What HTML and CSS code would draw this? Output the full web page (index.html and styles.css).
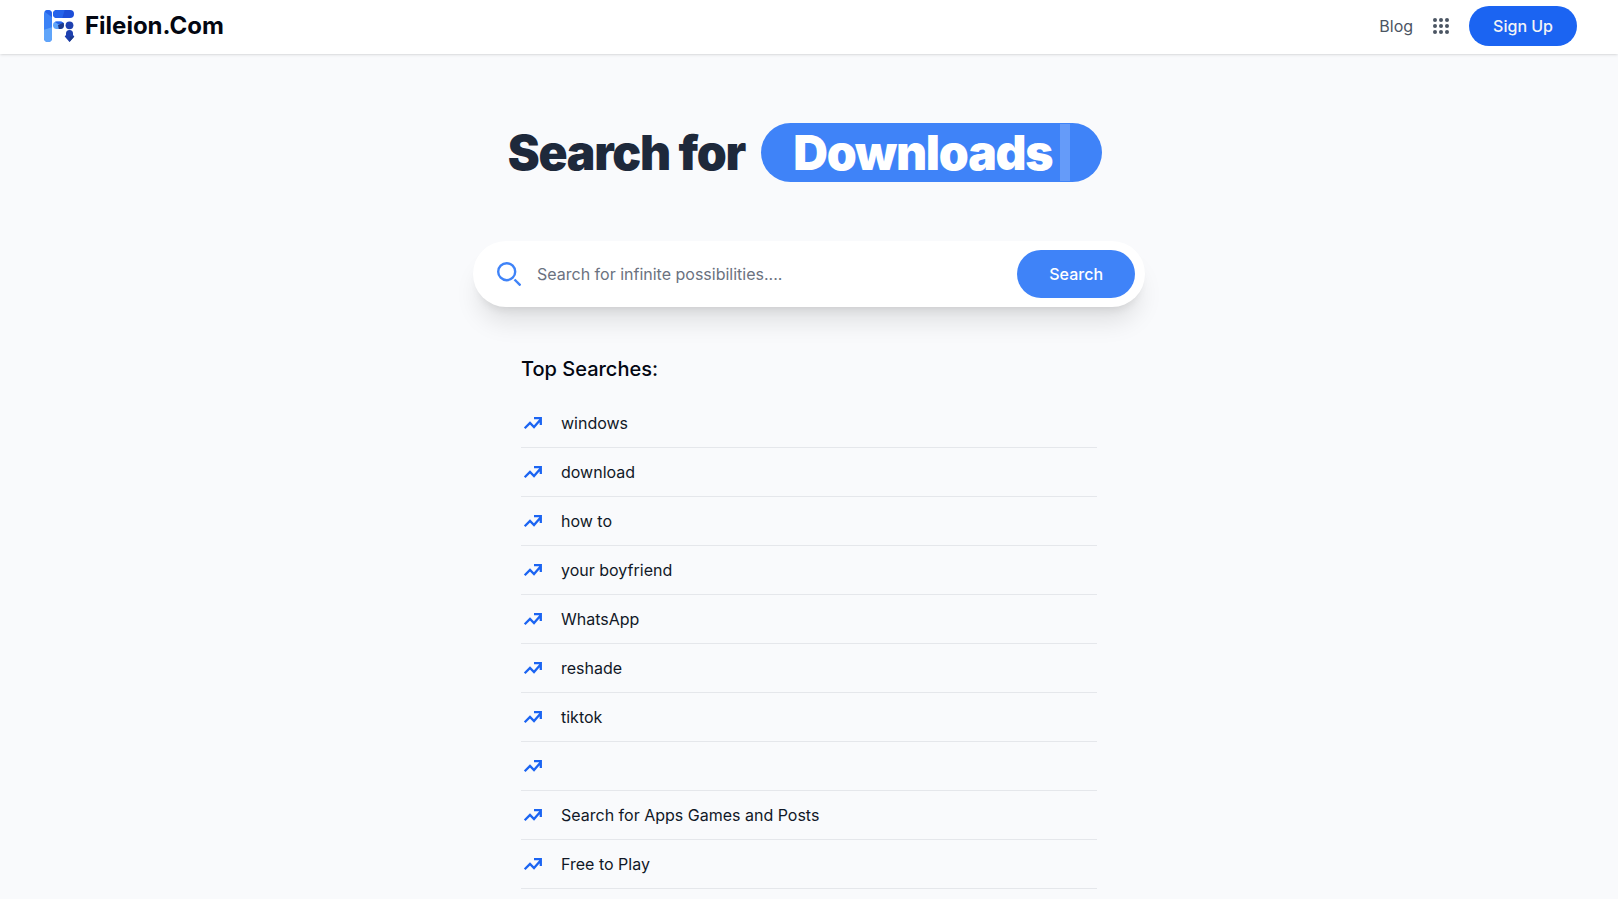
FILE: index.html
```html
<!DOCTYPE html>
<html lang="en">
<head>
<meta charset="utf-8">
<meta name="viewport" content="width=device-width, initial-scale=1">
<title>Fileion.Com</title>
<link rel="stylesheet" href="styles.css">
</head>
<body>
<svg class="sprite" aria-hidden="true">
  <symbol id="trend" viewBox="0 0 24 24"><path fill="none" stroke="currentColor" stroke-width="2.300" d="M3.700 17.300L9 12l4 4 7-8M13 7.200h6.800v6.800"/></symbol>
</svg>
<header class="header">
  <a class="brand" href="#">
    <svg class="brand-icon" viewBox="0 0 32 34" aria-hidden="true">
      <defs><clipPath id="stem"><rect x="1" y="1" width="8" height="32" rx="4"/></clipPath><clipPath id="bar"><rect x="10" y="1" width="21" height="8" rx="4"/></clipPath><clipPath id="bean"><rect x="10" y="12.500" width="11" height="7.500" rx="3.700"/></clipPath></defs>
      <g clip-path="url(#stem)"><path fill="#3b82f6" d="M0 0h10v34H0z"/><path fill="#2563eb" d="M0 0h10v9L2 3z"/><path fill="#60a5fa" d="M0 21l10-3v16H0z"/></g>
      <g clip-path="url(#bar)"><path fill="#1d4ed8" d="M10 0h22v10H10z"/><path fill="#2563eb" d="M10 0h12l-3 10h-9z"/></g>
      <g clip-path="url(#bean)"><path fill="#60a5fa" d="M9 11h13v10H9z"/><path fill="#2563eb" d="M9 11h13v5l-7-1z"/><path fill="#1e3a8a" d="M15 16l7-3v8h-6z"/></g>
      <circle cx="26.500" cy="16.300" r="3.900" fill="#1e40af"/>
      <path fill="#1e40af" d="M23 26v-1.500a3.500 3.500 0 0 1 7 0V26l1.300 1.500-4.800 5.500-4.800-5.500z"/><path fill="#1e3a8a" d="M27 27.500h4.300L26.500 33z"/>
    </svg>
    <span>Fileion.Com</span>
  </a>
  <nav class="nav">
    <a class="nav-link" href="#">Blog</a>
    <button class="apps" type="button" aria-label="Apps">
      <svg class="apps-icon" viewBox="0 0 16 16" fill="currentColor" aria-hidden="true"><circle cx="2" cy="2" r="2"/><circle cx="8" cy="2" r="2"/><circle cx="14" cy="2" r="2"/><circle cx="2" cy="8" r="2"/><circle cx="8" cy="8" r="2"/><circle cx="14" cy="8" r="2"/><circle cx="2" cy="14" r="2"/><circle cx="8" cy="14" r="2"/><circle cx="14" cy="14" r="2"/></svg>
    </button>
    <a class="signup" href="#">Sign Up</a>
  </nav>
</header>
<main class="main">
  <h1 class="title"><span>Search for</span><span class="pill"><span>Downloads</span><span class="cursor"></span></span></h1>
  <form class="search" role="search">
    <label class="search-label" for="q" aria-label="Search">
      <svg class="search-icon" viewBox="0 0 24 24" fill="none" stroke="currentColor" stroke-width="2.400" aria-hidden="true"><circle cx="9.700" cy="9.700" r="8.500"/><path d="M17.500 17.500l6 6"/></svg>
    </label>
    <input class="search-input" id="q" type="text" placeholder="Search for infinite possibilities....">
    <button class="search-button" type="submit">Search</button>
  </form>
  <section class="top">
    <h2 class="top-title">Top Searches:</h2>
    <ul class="list">
      <li><a class="item" href="#"><svg class="trend" aria-hidden="true"><use href="#trend"/></svg><span>windows</span></a></li>
      <li><a class="item" href="#"><svg class="trend" aria-hidden="true"><use href="#trend"/></svg><span>download</span></a></li>
      <li><a class="item" href="#"><svg class="trend" aria-hidden="true"><use href="#trend"/></svg><span>how to</span></a></li>
      <li><a class="item" href="#"><svg class="trend" aria-hidden="true"><use href="#trend"/></svg><span>your boyfriend</span></a></li>
      <li><a class="item" href="#"><svg class="trend" aria-hidden="true"><use href="#trend"/></svg><span>WhatsApp</span></a></li>
      <li><a class="item" href="#"><svg class="trend" aria-hidden="true"><use href="#trend"/></svg><span>reshade</span></a></li>
      <li><a class="item" href="#"><svg class="trend" aria-hidden="true"><use href="#trend"/></svg><span>tiktok</span></a></li>
      <li><a class="item" href="#"><svg class="trend" aria-hidden="true"><use href="#trend"/></svg><span></span></a></li>
      <li><a class="item" href="#"><svg class="trend" aria-hidden="true"><use href="#trend"/></svg><span>Search for Apps Games and Posts</span></a></li>
      <li><a class="item" href="#"><svg class="trend" aria-hidden="true"><use href="#trend"/></svg><span>Free to Play</span></a></li>
    </ul>
  </section>
</main>
</body>
</html>
```
FILE: styles.css
```css
*, *::before, *::after { box-sizing: border-box; }
body { margin: 0; background: #f9fafc; color: #111827; font: 400 16px/24px Inter, "Liberation Sans", sans-serif; }
a { color: inherit; text-decoration: none; }
button, input { font: inherit; border: 0; padding: 0; background: none; }
button { cursor: pointer; }
.sprite { display: block; width: 0; height: 0; }
.header { display: flex; align-items: center; justify-content: space-between; height: 54px; padding: 0 41px 2px 43px; background: #fff; box-shadow: 0 1px 3px rgba(0,0,0,.1), 0 1px 2px -1px rgba(0,0,0,.1); }
.brand { display: flex; align-items: center; gap: 10px; color: #030712; font-size: 24px; line-height: 32px; font-weight: 700; }
.brand-icon { width: 32px; height: 34px; }
.nav { display: flex; align-items: center; gap: 20px; color: #4b5563; }
.apps { display: flex; color: inherit; }
.apps-icon { width: 16px; height: 16px; }
.signup { padding: 8px 24px; border-radius: 20px; background: #1b64f2; color: #f3f4f6; font-weight: 500; }
.main { padding: 69px 16px 0; }
.title { display: flex; justify-content: center; align-items: center; gap: 16px; margin: 0; padding-right: 8px; color: #1e293b; font-size: 48px; line-height: 59px; font-weight: 900; letter-spacing: -0.025em; }
.pill { display: flex; align-items: center; gap: 8px; padding: 0 32px; border-radius: 30px; background: #3f83f8; color: #fff; }
.cursor { width: 10px; height: 57px; background: rgba(255,255,255,.2); }
.search { display: flex; align-items: center; max-width: 672px; height: 66px; margin: 59px auto 0; padding: 0 10px 0 24px; border-radius: 33px; background: #fff; box-shadow: 0 20px 25px -5px rgba(0,0,0,.1), 0 8px 10px -6px rgba(0,0,0,.1); }
.search-label { display: flex; color: #3f83f8; }
.search-icon { width: 24px; height: 24px; }
.search-input { flex: 1; min-width: 0; height: 48px; margin: 0 16px; outline: 0; color: #1f2937; }
.search-input::placeholder { color: #6b7280; opacity: 1; }
.search-button { height: 48px; padding: 0 32px; border-radius: 24px; background: #3f83f8; color: #fff; font-weight: 500; }
.top { max-width: 576px; margin: 48px auto 0; }
.top-title { margin: 0; color: #030712; font-size: 20px; line-height: 28px; font-weight: 500; }
.list { margin: 16px 0 0; padding: 0; list-style: none; }
.item { display: flex; align-items: center; gap: 16px; height: 49px; border-bottom: 1px solid #e5e7eb; }
.trend { width: 24px; height: 24px; color: #1b64f2; }
```
